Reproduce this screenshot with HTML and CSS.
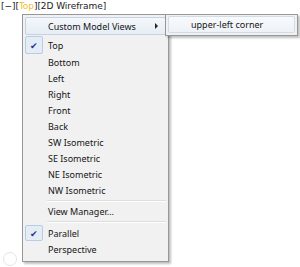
FILE: index.html
```html
<!DOCTYPE html>
<html lang="en">
<head>
  <meta charset="UTF-8">
  <meta name="viewport" content="width=device-width, initial-scale=1.0">
  <title>Viewport Menu</title>
  <link rel="stylesheet" href="styles.css">
</head>
<body>
  <!-- Rótulo do viewport -->
  <div class="vp-label">[&minus;][<span class="vp-active">Top</span>][2D Wireframe]</div>

  <!-- Menu de contexto -->
  <div class="menu">
    <div class="item item-hover has-sub">
      <span class="text">Custom Model Views</span>
      <span class="arrow"></span>
    </div>
    <div class="item item-top checked"><span class="check">&#10004;</span><span class="text">Top</span></div>
    <div class="item"><span class="text">Bottom</span></div>
    <div class="item"><span class="text">Left</span></div>
    <div class="item"><span class="text">Right</span></div>
    <div class="item"><span class="text">Front</span></div>
    <div class="item"><span class="text">Back</span></div>
    <div class="item"><span class="text">SW Isometric</span></div>
    <div class="item"><span class="text">SE Isometric</span></div>
    <div class="item"><span class="text">NE Isometric</span></div>
    <div class="item"><span class="text">NW Isometric</span></div>
    <div class="sep"></div>
    <div class="item"><span class="text">View Manager...</span></div>
    <div class="sep sep-last"></div>
    <div class="item checked"><span class="check">&#10004;</span><span class="text">Parallel</span></div>
    <div class="item"><span class="text">Perspective</span></div>

    <!-- Submenu -->
    <div class="submenu">
      <div class="sub-item">upper-left corner</div>
    </div>
  </div>

  <!-- Ícone apagado no canto -->
  <div class="corner-icon"></div>
</body>
</html>
```

FILE: styles.css
```css
/* Layout geral */
body {
  margin: 0;
  width: 300px;
  height: 267px;
  background: #ffffff;
  font-family: "Noto Sans", "Open Sans", sans-serif;
  position: relative;
  overflow: hidden;
}

/* Rótulo do viewport */
.vp-label {
  font-family: "DejaVu Sans", sans-serif;
  font-size: 9px;
  color: #222;
  padding: 1px 0 0 1px;
  height: 13px;
  letter-spacing: -0.05px;
}

.vp-active {
  color: #f0c030;
}

/* Menu */
.menu {
  position: relative;
  margin-left: 22px;
  width: 145px;
  padding: 1px 0 4px;
  background: #f1f1f1;
  border: 1px solid #979797;
  box-shadow: 2px 2px 2px rgba(0, 0, 0, 0.25);
}

.item {
  display: flex;
  align-items: center;
  height: 16px;
  margin: 0 2px;
  position: relative;
  font-size: 9px;
  color: #151515;
}

.item .text {
  margin-left: 23px;
}

.item-hover {
  height: 16px;
  margin-top: 1px;
  margin-bottom: 1px;
  background: linear-gradient(#f4f7fb, #e6edf5);
  border: 1px solid #c4d2e2;
  border-radius: 2px;
}

.item-hover .text {
  margin-left: 22px;
}

.item-top {
  height: 18px;
}

.arrow {
  position: absolute;
  right: 7px;
  top: 5px;
  width: 0;
  height: 0;
  border-left: 3px solid #222;
  border-top: 3px solid transparent;
  border-bottom: 3px solid transparent;
}

.check {
  position: absolute;
  left: 0;
  top: 0;
  width: 16px;
  height: calc(100% - 2px);
  background: #e4ecf6;
  border: 1px solid #b8cde4;
  border-radius: 2px;
  color: #2b3790;
  font-size: 9px;
  display: flex;
  align-items: center;
  justify-content: center;
}

.sep {
  height: 1px;
  margin: 2px 2px 1px 24px;
  background: #dedede;
  border-bottom: 1px solid #fff;
}

.sep-last {
  margin-bottom: 2px;
}

/* Submenu */
.submenu {
  position: absolute;
  left: 142px;
  top: -1px;
  width: 127px;
  padding: 1px 2px 2px;
  background: #f1f1f1;
  border: 1px solid #979797;
  box-shadow: 2px 2px 2px rgba(0, 0, 0, 0.25);
}

.sub-item {
  height: 15px;
  line-height: 15px;
  font-size: 9px;
  color: #151515;
  padding-left: 22px;
  background: linear-gradient(#f8fafc, #eef2f7);
  border: 1px solid #d2dce8;
  border-radius: 2px;
}

/* Ícone no canto inferior */
.corner-icon {
  position: absolute;
  left: 3px;
  top: 252px;
  width: 12px;
  height: 12px;
  border: 1px solid #e4e4e4;
  border-radius: 50%;
}
```
